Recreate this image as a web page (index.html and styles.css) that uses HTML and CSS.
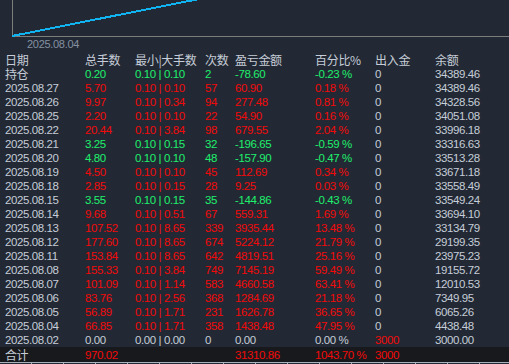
FILE: index.html
```html
<!DOCTYPE html>
<html lang="zh">
<head>
    <meta charset="UTF-8">
    <title>统计</title>
    <link rel="stylesheet" href="styles.css">
</head>
<body>
    <div class="chart">
        <svg class="chart-plot" width="509" height="38" viewBox="0 0 509 38">
            <line x1="12.5" y1="0" x2="12.5" y2="37" stroke="#7d7d7d" stroke-width="1"/>
            <line x1="12" y1="36.5" x2="509" y2="36.5" stroke="#7d7d7d" stroke-width="1"/>
            <line x1="12" y1="36" x2="199" y2="-1" stroke="#10b4f0" stroke-width="2" shape-rendering="crispEdges"/>
        </svg>
        <div class="chart-label">2025.08.04</div>
    </div>

    <table class="stats">
        <colgroup>
            <col style="width:85px"><col style="width:50px"><col style="width:70px"><col style="width:30px">
            <col style="width:80px"><col style="width:60px"><col style="width:60px"><col>
        </colgroup>
        <thead>
            <tr class="head">
                <th>日期</th><th>总手数</th><th>最小|大手数</th><th>次数</th><th>盈亏金额</th><th>百分比%</th><th>出入金</th><th>余额</th>
            </tr>
        </thead>
        <tbody>
            <tr class="up"><td class="cn">持仓</td><td>0.20</td><td>0.10 | 0.10</td><td>2</td><td>-78.60</td><td>-0.23 %</td><td class="plain">0</td><td class="plain">34389.46</td></tr>
            <tr class="down"><td>2025.08.27</td><td>5.70</td><td>0.10 | 0.10</td><td>57</td><td>60.90</td><td>0.18 %</td><td class="plain">0</td><td class="plain">34389.46</td></tr>
            <tr class="down"><td>2025.08.26</td><td>9.97</td><td>0.10 | 0.34</td><td>94</td><td>277.48</td><td>0.81 %</td><td class="plain">0</td><td class="plain">34328.56</td></tr>
            <tr class="down"><td>2025.08.25</td><td>2.20</td><td>0.10 | 0.10</td><td>22</td><td>54.90</td><td>0.16 %</td><td class="plain">0</td><td class="plain">34051.08</td></tr>
            <tr class="down"><td>2025.08.22</td><td>20.44</td><td>0.10 | 3.84</td><td>98</td><td>679.55</td><td>2.04 %</td><td class="plain">0</td><td class="plain">33996.18</td></tr>
            <tr class="up"><td>2025.08.21</td><td>3.25</td><td>0.10 | 0.15</td><td>32</td><td>-196.65</td><td>-0.59 %</td><td class="plain">0</td><td class="plain">33316.63</td></tr>
            <tr class="up"><td>2025.08.20</td><td>4.80</td><td>0.10 | 0.10</td><td>48</td><td>-157.90</td><td>-0.47 %</td><td class="plain">0</td><td class="plain">33513.28</td></tr>
            <tr class="down"><td>2025.08.19</td><td>4.50</td><td>0.10 | 0.10</td><td>45</td><td>112.69</td><td>0.34 %</td><td class="plain">0</td><td class="plain">33671.18</td></tr>
            <tr class="down"><td>2025.08.18</td><td>2.85</td><td>0.10 | 0.15</td><td>28</td><td>9.25</td><td>0.03 %</td><td class="plain">0</td><td class="plain">33558.49</td></tr>
            <tr class="up"><td>2025.08.15</td><td>3.55</td><td>0.10 | 0.15</td><td>35</td><td>-144.86</td><td>-0.43 %</td><td class="plain">0</td><td class="plain">33549.24</td></tr>
            <tr class="down"><td>2025.08.14</td><td>9.68</td><td>0.10 | 0.51</td><td>67</td><td>559.31</td><td>1.69 %</td><td class="plain">0</td><td class="plain">33694.10</td></tr>
            <tr class="down"><td>2025.08.13</td><td>107.52</td><td>0.10 | 8.65</td><td>339</td><td>3935.44</td><td>13.48 %</td><td class="plain">0</td><td class="plain">33134.79</td></tr>
            <tr class="down"><td>2025.08.12</td><td>177.60</td><td>0.10 | 8.65</td><td>674</td><td>5224.12</td><td>21.79 %</td><td class="plain">0</td><td class="plain">29199.35</td></tr>
            <tr class="down"><td>2025.08.11</td><td>153.84</td><td>0.10 | 8.65</td><td>642</td><td>4819.51</td><td>25.16 %</td><td class="plain">0</td><td class="plain">23975.23</td></tr>
            <tr class="down"><td>2025.08.08</td><td>155.33</td><td>0.10 | 3.84</td><td>749</td><td>7145.19</td><td>59.49 %</td><td class="plain">0</td><td class="plain">19155.72</td></tr>
            <tr class="down"><td>2025.08.07</td><td>101.09</td><td>0.10 | 1.14</td><td>583</td><td>4660.58</td><td>63.41 %</td><td class="plain">0</td><td class="plain">12010.53</td></tr>
            <tr class="down"><td>2025.08.06</td><td>83.76</td><td>0.10 | 2.56</td><td>368</td><td>1284.69</td><td>21.18 %</td><td class="plain">0</td><td class="plain">7349.95</td></tr>
            <tr class="down"><td>2025.08.05</td><td>56.89</td><td>0.10 | 1.71</td><td>231</td><td>1626.78</td><td>36.65 %</td><td class="plain">0</td><td class="plain">6065.26</td></tr>
            <tr class="down"><td>2025.08.04</td><td>66.85</td><td>0.10 | 1.71</td><td>358</td><td>1438.48</td><td>47.95 %</td><td class="plain">0</td><td class="plain">4438.48</td></tr>
            <tr class="flat"><td>2025.08.02</td><td>0.00</td><td>0.00 | 0.00</td><td>0</td><td>0.00</td><td>0.00 %</td><td class="red">3000</td><td>3000.00</td></tr>
        </tbody>
        <tfoot>
            <tr class="total"><td class="cn">合计</td><td>970.02</td><td></td><td></td><td>31310.86</td><td>1043.70 %</td><td>3000</td><td></td></tr>
        </tfoot>
    </table>
    <div class="scale"></div>
</body>
</html>
```

FILE: styles.css
```css
body {
    margin: 0;
    padding: 0;
    width: 509px;
    height: 364px;
    overflow: hidden;
    background-color: #222934;
    font-family: 'Liberation Sans', 'Noto Sans CJK SC', sans-serif;
    color: #c6cdd8;
}

.chart {
    height: 53px;
}

.chart-plot {
    display: block;
}

.chart-label {
    padding-left: 27px;
    font-size: 11px;
    line-height: 12px;
    letter-spacing: -0.3px;
    color: #8590a2;
}

.stats {
    width: 509px;
    border-collapse: collapse;
    table-layout: fixed;
}

.stats th,
.stats td {
    padding: 0;
    height: 14px;
    line-height: 14px;
    text-align: left;
    white-space: nowrap;
    font-size: 11.5px;
    letter-spacing: -0.4px;
}

.stats th:first-child,
.stats td:first-child {
    padding-left: 5px;
    color: #c6cdd8;
}

.stats th {
    font-weight: normal;
    font-family: 'Noto Sans CJK SC', sans-serif;
    font-size: 12px;
    letter-spacing: -0.3px;
    color: #c6cdd8;
}

.stats td.cn {
    font-family: 'Noto Sans CJK SC', sans-serif;
    font-size: 12px;
}

.up td {
    color: #1fef6c;
}

.down td {
    color: #f20a0a;
}

.flat td,
.stats td.plain {
    color: #c6cdd8;
}

.stats td.red {
    color: #f20a0a;
}

.total td {
    height: 15px;
    background-color: #18191c;
    color: #f20a0a;
}

.scale {
    height: 3px;
    border-top: 1px solid #a8b0bb;
    background: repeating-linear-gradient(to right, transparent 0, transparent 31px, #a8b0bb 31px, #a8b0bb 32px);
}
```
